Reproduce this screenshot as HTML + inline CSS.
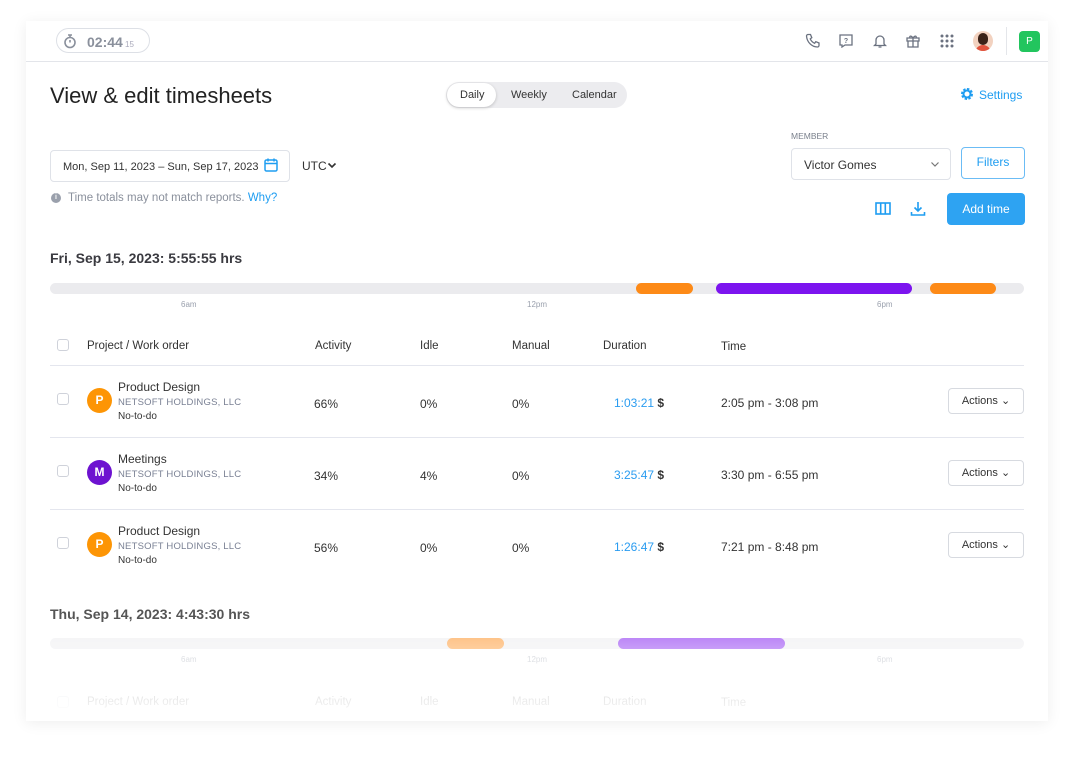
<!DOCTYPE html>
<html><head><meta charset="utf-8"><style>
*{box-sizing:border-box;margin:0;padding:0}
body{width:1074px;height:768px;background:#fff;font-family:"Liberation Sans",Arial,sans-serif;position:relative;overflow:hidden;color:#2b2b33}
.card{position:absolute;left:26px;top:21px;width:1022px;height:700px;background:#fff;box-shadow:0 2px 14px rgba(0,0,0,.07);overflow:hidden}
.a{position:absolute;white-space:nowrap}
.fade{position:absolute;left:0;top:612px;width:100%;height:108px;background:linear-gradient(rgba(255,255,255,.45),rgba(255,255,255,.8) 40%,#fff 85%)}
.bar{position:absolute;height:11px;border-radius:6px}
.hdr{font-size:11.5px;color:#333}
.cb{position:absolute;width:12px;height:12px;border:1px solid #cfd2da;border-radius:3px}
.av{position:absolute;width:25px;height:25px;border-radius:50%;color:#fff;font-size:12px;font-weight:bold;text-align:center;line-height:25px}
.t13{font-size:12px;color:#333}
.co{font-size:9.5px;color:#7a8194;letter-spacing:.2px}
.act{position:absolute;width:76px;height:26px;border:1px solid #d7dae0;border-radius:4px;font-size:11px;color:#333;text-align:center;line-height:24px}
.line{position:absolute;left:24px;width:974px;height:1px;background:#e4e6ee}
.tick{font-size:8px;color:#9aa0ad}
</style></head><body>
<div class="card">
 <div class="a" style="left:30px;top:7px;width:94px;height:25px;border:1px solid #dde0e6;border-radius:13px"></div>
 <svg class="a" style="left:37px;top:12px" width="14" height="16" viewBox="0 0 14 16"><circle cx="7" cy="9.5" r="5" fill="none" stroke="#8a909c" stroke-width="1.6"/><path d="M5 2h4M7 2v2.5M7 9.5V7" stroke="#8a909c" stroke-width="1.6" fill="none"/></svg>
 <div class="a" style="left:61px;top:13px;font-size:14px;color:#8a909c;font-weight:bold">02:44<span style="font-size:8px;font-weight:normal;color:#aab"> 15</span></div>
 <div class="a" style="left:0;top:40px;width:1022px;height:1px;background:#e3e5ea"></div>
 <svg class="a" style="left:779px;top:12px" width="16" height="16" viewBox="0 0 16 16"><path d="M3 1.5l2.5 0 1.3 3.2-1.6 1.2c.9 2 2.4 3.5 4.4 4.4l1.2-1.6 3.2 1.3v2.5c0 .8-.7 1.5-1.5 1.5C6.800 14 2 9.200 1.500 3c0-.8.700-1.500 1.500-1.500z" fill="none" stroke="#6b7280" stroke-width="1.3"/></svg>
 <svg class="a" style="left:813px;top:13px" width="14" height="14" viewBox="0 0 14 14"><path d="M1 1h12v10H6l-3 2v-2H1z" fill="none" stroke="#6b7280" stroke-width="1.3"/><text x="7" y="9" font-size="7" text-anchor="middle" fill="#6b7280" font-family="Liberation Sans" font-weight="bold">?</text></svg>
 <svg class="a" style="left:847px;top:12px" width="14" height="16" viewBox="0 0 14 16"><path d="M3 11V7a4 4 0 018 0v4l1.500 1.500h-11z M5.500 14h3" fill="none" stroke="#6b7280" stroke-width="1.3"/></svg>
 <svg class="a" style="left:880px;top:13px" width="14" height="14" viewBox="0 0 14 14"><path d="M1 4h12v3H1zM2 7h10v6H2zM7 4v9M7 4C5 1 3 2 4 4M7 4c2-3 4-2 3 0" fill="none" stroke="#6b7280" stroke-width="1.3"/></svg>
 <svg class="a" style="left:914px;top:13px" width="14" height="14" viewBox="0 0 14 14" fill="#6b7280"><circle cx="2" cy="2" r="1.5"/><circle cx="7" cy="2" r="1.5"/><circle cx="12" cy="2" r="1.5"/><circle cx="2" cy="7" r="1.5"/><circle cx="7" cy="7" r="1.5"/><circle cx="12" cy="7" r="1.5"/><circle cx="2" cy="12" r="1.5"/><circle cx="7" cy="12" r="1.5"/><circle cx="12" cy="12" r="1.5"/></svg>
 <div class="a" style="left:947px;top:10px;width:20px;height:20px;border-radius:50%;background:#f2d2c0;overflow:hidden"><div style="position:absolute;left:5px;top:2px;width:10px;height:12px;border-radius:5px;background:#3a2218"></div><div style="position:absolute;left:2px;top:14px;width:16px;height:8px;border-radius:8px 8px 0 0;background:#e0533d"></div></div>
 <div class="a" style="left:980px;top:6px;width:1px;height:28px;background:#e4e6ea"></div>
 <div class="a" style="left:993px;top:10px;width:21px;height:21px;border-radius:4px;background:#22c55e;color:#fff;font-size:10px;text-align:center;line-height:21px">P</div>

 <div class="a" style="left:24px;top:62px;font-size:22px;color:#222">View &amp; edit timesheets</div>
 <div class="a" style="left:420px;top:61px;width:181px;height:26px;background:#ececef;border-radius:13px"></div>
 <div class="a" style="left:421px;top:62px;width:49px;height:24px;background:#fff;border-radius:12px;box-shadow:0 1px 3px rgba(0,0,0,.2)"></div>
 <div class="a" style="left:434px;top:68px;font-size:11px;color:#333">Daily</div>
 <div class="a" style="left:485px;top:68px;font-size:11px;color:#333">Weekly</div>
 <div class="a" style="left:546px;top:68px;font-size:11px;color:#333">Calendar</div>
 <svg class="a" style="left:934px;top:66px" width="14" height="14" viewBox="0 0 14 14"><circle cx="7" cy="7" r="4.5" fill="none" stroke="#1e9df1" stroke-width="3" stroke-dasharray="2.2 1.3"/><circle cx="7" cy="7" r="3.5" fill="none" stroke="#1e9df1" stroke-width="2"/></svg>
 <div class="a" style="left:953px;top:67px;font-size:12px;color:#1e9df1">Settings</div>

 <div class="a" style="left:24px;top:129px;width:240px;height:32px;border:1px solid #dfe2e8;border-radius:4px"></div>
 <div class="a" style="left:37px;top:140px;font-size:11px;color:#333">Mon, Sep 11, 2023 – Sun, Sep 17, 2023</div>
 <svg class="a" style="left:238px;top:137px" width="14" height="14" viewBox="0 0 14 14"><rect x="1" y="2" width="12" height="11" rx="1.5" fill="none" stroke="#1e9df1" stroke-width="1.5"/><path d="M1 5.500h12M4 0.500v3M10 0.500v3" stroke="#1e9df1" stroke-width="1.5"/></svg>
 <div class="a" style="left:276px;top:138px;font-size:12px;color:#333">UTC</div>
 <svg class="a" style="left:301px;top:141px" width="10" height="7" viewBox="0 0 10 7"><path d="M1.500 1.500L5 5l3.500-3.500" fill="none" stroke="#333" stroke-width="1.6"/></svg>
 <div class="a" style="left:25px;top:172px;width:10px;height:10px;border-radius:50%;background:#9aa0ac;color:#fff;font-size:7px;text-align:center;line-height:10px;font-weight:bold">i</div>
 <div class="a" style="left:42px;top:171px;font-size:11.5px;color:#8a909c">Time totals may not match reports. <span style="color:#1e9df1">Why?</span></div>

 <div class="a" style="left:765px;top:110px;font-size:8.5px;color:#7a808c">MEMBER</div>
 <div class="a" style="left:765px;top:127px;width:160px;height:32px;border:1px solid #dfe2e8;border-radius:4px"></div>
 <div class="a" style="left:778px;top:137px;font-size:12px;color:#333">Victor Gomes</div>
 <svg class="a" style="left:904px;top:140px" width="10" height="7" viewBox="0 0 10 7"><path d="M1.500 1.500L5 5l3.500-3.500" fill="none" stroke="#777" stroke-width="1.2"/></svg>
 <div class="a" style="left:935px;top:126px;width:64px;height:32px;border:1.5px solid #6bbcf5;border-radius:4px;color:#1e9df1;font-size:12px;text-align:center;line-height:29px">Filters</div>
 <svg class="a" style="left:849px;top:181px" width="16" height="13" viewBox="0 0 16 13"><rect x="1" y="1" width="14" height="11" fill="none" stroke="#1e9df1" stroke-width="1.6"/><path d="M5.700 1v11M10.300 1v11" stroke="#1e9df1" stroke-width="1.6"/></svg>
 <svg class="a" style="left:884px;top:180px" width="16" height="16" viewBox="0 0 16 16"><path d="M8 1v9M4.500 6.500L8 10l3.500-3.500M1.500 11v3h13v-3" fill="none" stroke="#1e9df1" stroke-width="1.6"/></svg>
 <div class="a" style="left:921px;top:172px;width:78px;height:32px;background:#2ea3f2;border-radius:4px;color:#fff;font-size:12px;text-align:center;line-height:32px">Add time</div>

 <div class="a" style="left:24px;top:229px;font-size:14px;font-weight:bold;color:#3a3a40">Fri, Sep 15, 2023: 5:55:55 hrs</div>
 <div class="bar" style="left:24px;top:262px;width:974px;background:#ebebee"></div>
 <div class="bar" style="left:610px;top:262px;width:57px;background:#fd8a17"></div>
 <div class="bar" style="left:690px;top:262px;width:196px;background:#7c14ef"></div>
 <div class="bar" style="left:904px;top:262px;width:66px;background:#fd8a17"></div>
 <div class="a tick" style="left:155px;top:279px">6am</div>
 <div class="a tick" style="left:501px;top:279px">12pm</div>
 <div class="a tick" style="left:851px;top:279px">6pm</div>

 <div class="cb" style="left:31px;top:318px"></div>
 <div class="a hdr" style="left:61px;top:319px">Project / Work order</div>
 <div class="a hdr" style="left:289px;top:319px">Activity</div>
 <div class="a hdr" style="left:394px;top:319px">Idle</div>
 <div class="a hdr" style="left:486px;top:319px">Manual</div>
 <div class="a hdr" style="left:577px;top:319px">Duration</div>
 <div class="a hdr" style="left:695px;top:320px">Time</div>
 <div class="line" style="top:344px"></div>

 <div class="cb" style="left:31px;top:372px"></div>
 <div class="av" style="left:61px;top:367px;background:#fd9505">P</div>
 <div class="a t13" style="left:92px;top:359px">Product Design</div>
 <div class="a co" style="left:92px;top:376px">NETSOFT HOLDINGS, LLC</div>
 <div class="a" style="left:92px;top:390px;font-size:10px;color:#333">No-to-do</div>
 <div class="a t13" style="left:288px;top:376px">66%</div>
 <div class="a t13" style="left:394px;top:376px">0%</div>
 <div class="a t13" style="left:486px;top:376px">0%</div>
 <div class="a t13" style="left:588px;top:375px"><span style="color:#2a9cf0">1:03:21</span> <b>$</b></div>
 <div class="a t13" style="left:695px;top:375px">2:05 pm - 3:08 pm</div>
 <div class="act" style="left:922px;top:367px">Actions ⌄</div>
 <div class="line" style="top:416px"></div>

 <div class="cb" style="left:31px;top:444px"></div>
 <div class="av" style="left:61px;top:439px;background:#6d12d0">M</div>
 <div class="a t13" style="left:92px;top:431px">Meetings</div>
 <div class="a co" style="left:92px;top:448px">NETSOFT HOLDINGS, LLC</div>
 <div class="a" style="left:92px;top:462px;font-size:10px;color:#333">No-to-do</div>
 <div class="a t13" style="left:288px;top:448px">34%</div>
 <div class="a t13" style="left:394px;top:448px">4%</div>
 <div class="a t13" style="left:486px;top:448px">0%</div>
 <div class="a t13" style="left:588px;top:447px"><span style="color:#2a9cf0">3:25:47</span> <b>$</b></div>
 <div class="a t13" style="left:695px;top:447px">3:30 pm - 6:55 pm</div>
 <div class="act" style="left:922px;top:439px">Actions ⌄</div>
 <div class="line" style="top:488px"></div>

 <div class="cb" style="left:31px;top:516px"></div>
 <div class="av" style="left:61px;top:511px;background:#fd9505">P</div>
 <div class="a t13" style="left:92px;top:503px">Product Design</div>
 <div class="a co" style="left:92px;top:520px">NETSOFT HOLDINGS, LLC</div>
 <div class="a" style="left:92px;top:534px;font-size:10px;color:#333">No-to-do</div>
 <div class="a t13" style="left:288px;top:520px">56%</div>
 <div class="a t13" style="left:394px;top:520px">0%</div>
 <div class="a t13" style="left:486px;top:520px">0%</div>
 <div class="a t13" style="left:588px;top:519px"><span style="color:#2a9cf0">1:26:47</span> <b>$</b></div>
 <div class="a t13" style="left:695px;top:519px">7:21 pm - 8:48 pm</div>
 <div class="act" style="left:922px;top:511px">Actions ⌄</div>

 <div class="a" style="left:24px;top:585px;font-size:14px;font-weight:bold;color:#555">Thu, Sep 14, 2023: 4:43:30 hrs</div>
 <div class="bar" style="left:24px;top:617px;width:974px;background:#ebebee"></div>
 <div class="bar" style="left:421px;top:617px;width:57px;background:#fd8a17"></div>
 <div class="bar" style="left:592px;top:617px;width:167px;background:#7c14ef"></div>
 <div class="a tick" style="left:155px;top:634px">6am</div>
 <div class="a tick" style="left:501px;top:634px">12pm</div>
 <div class="a tick" style="left:851px;top:634px">6pm</div>
 <div class="cb" style="left:31px;top:675px"></div>
 <div class="a hdr" style="left:61px;top:675px">Project / Work order</div>
 <div class="a hdr" style="left:289px;top:675px">Activity</div>
 <div class="a hdr" style="left:394px;top:675px">Idle</div>
 <div class="a hdr" style="left:486px;top:675px">Manual</div>
 <div class="a hdr" style="left:577px;top:675px">Duration</div>
 <div class="a hdr" style="left:695px;top:676px">Time</div>
 <div class="fade"></div>
</div>
</body></html>
